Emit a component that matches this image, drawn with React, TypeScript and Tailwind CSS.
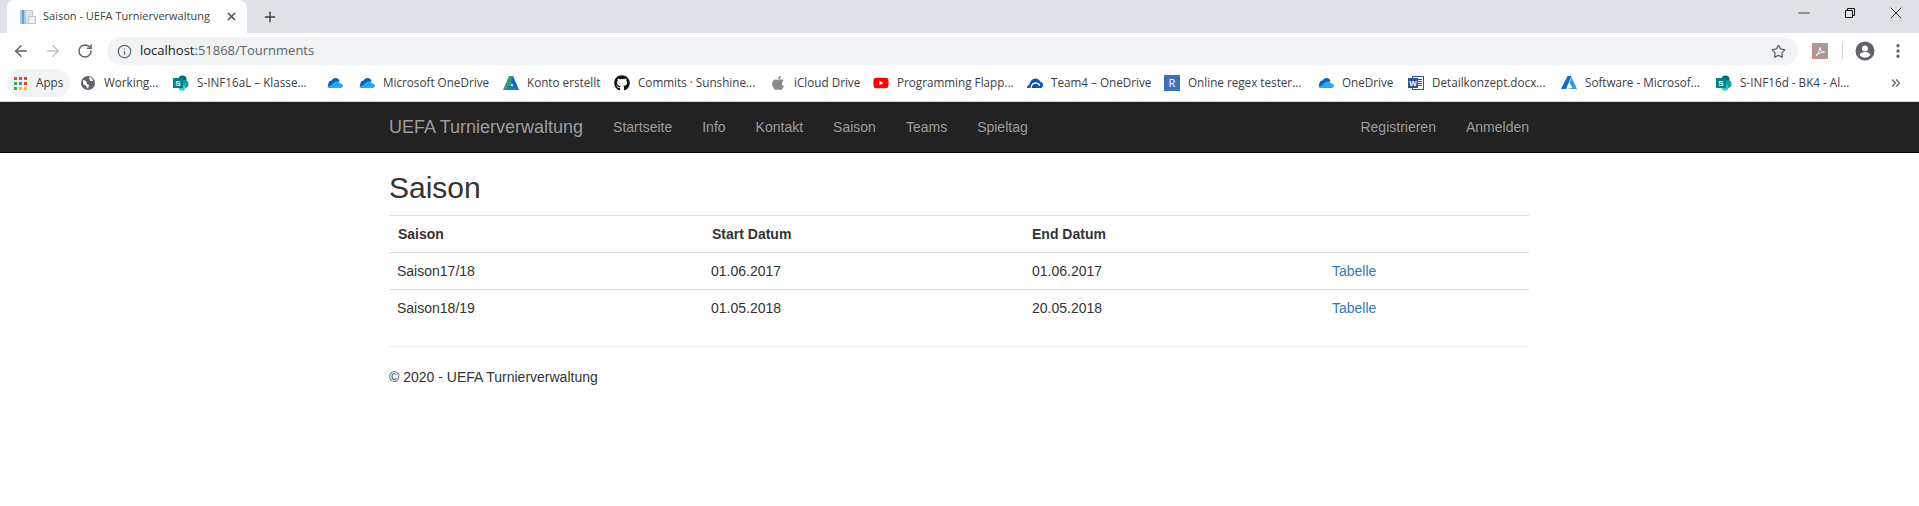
import { FaGithub, FaApple, FaYoutube } from "react-icons/fa";
import { ArrowLeft, ArrowRight, RotateCw, Info, Star, Plus, X, Minus, EllipsisVertical, ChevronsRight } from "lucide-react";

const SharePoint = () => (
  <svg width="16" height="16" viewBox="0 0 16 16">
    <circle cx="9.500" cy="4.500" r="4" fill="#036c70" />
    <circle cx="11.500" cy="9" r="4" fill="#1a9ba1" />
    <circle cx="9" cy="12.500" r="3.300" fill="#37c6d0" />
    <rect x="0" y="3" width="10" height="10" fill="#038387" />
    <text x="5" y="11" fontSize="8" fontWeight="700" fill="#fff" textAnchor="middle" fontFamily="Liberation Sans, sans-serif">S</text>
  </svg>
);

const Cloud = () => (
  <svg width="16" height="16" viewBox="0 0 16 16">
    <path d="M1.500 8.500C1.500 6.500 3 5.500 4.500 5.500 5.500 3.800 7 3 8.500 3c2 0 3.500 1.300 4 3L7 11 1.500 12C.5 11 1 9.500 1.500 8.500z" fill="#0364b8" />
    <path d="M6 8.500c.8-1.500 2.500-2.500 4-2.300 1.300.1 2.300.9 2.700 2 1.700 0 3.300 1 3.300 2.300 0 1.300-1 2.500-2.500 2.500H3c-1.500 0-2.500-.6-3-1.500 1 .3 3.500-.5 6-3z" fill="#28a8ea" />
  </svg>
);

// older OneDrive for Business cloud, solid blue with a white arc
const BusinessCloud = () => (
  <svg width="16" height="16" viewBox="0 0 16 16">
    <path d="M0 13c0-2 1-3.300 2.500-3.600C3 6.500 5.500 3.500 8.500 3.500c2.300 0 4 1.400 4.700 3.300 1.700.3 2.800 1.300 2.800 3.200 0 1.800-1 3-2.500 3z" fill="#0b4fb0" />
    <path d="M4 13c.3-3 2.500-5 5-5 2 0 3.300 1.200 3.800 3" fill="none" stroke="#fff" strokeWidth="1.300" />
  </svg>
);

const bookmarks: { label?: string; icon: React.ReactNode; width: string }[] = [
  { label: "Working...", width: "w-[93px]", icon: (
    <svg width="16" height="16" viewBox="0 0 16 16"><circle cx="8" cy="8" r="7" fill="#5f6368" /><path d="M3 5l3 1 1 3 2 1-1 4-2-3-3-2zM9 2l3 1 1 3-3 0z" fill="#fff" /></svg>
  ) },
  { label: "S-INF16aL – Klasse...", width: "w-[154px]", icon: <SharePoint /> },
  { width: "w-[32px]", icon: <Cloud /> },
  { label: "Microsoft OneDrive", width: "w-[144px]", icon: <Cloud /> },
  { label: "Konto erstellt", width: "w-[111px]", icon: (
    <svg width="16" height="16" viewBox="0 0 16 16"><path d="M6 1h4l1 3-5 11H0z" fill="#2f9e6e" /><path d="M10 1l6 14h-4L8 6z" fill="#0f6cb5" /><path d="M5 11h6l1 4H3z" fill="#1f7f9e" /></svg>
  ) },
  { label: "Commits · Sunshine...", width: "w-[156px]", icon: <FaGithub size={16} color="#111" /> },
  { label: "iCloud Drive", width: "w-[103px]", icon: <FaApple size={16} color="#8a8a8a" /> },
  { label: "Programming Flapp...", width: "w-[154px]", icon: <FaYoutube size={16} color="#f00" /> },
  { label: "Team4 – OneDrive", width: "w-[137px]", icon: <BusinessCloud /> },
  { label: "Online regex tester...", width: "w-[154px]", icon: (
    <span className="flex h-4 w-4 items-center justify-center bg-[#3f72b5] text-[11px] text-white">R</span>
  ) },
  { label: "OneDrive", width: "w-[90px]", icon: <Cloud /> },
  { label: "Detailkonzept.docx...", width: "w-[153px]", icon: (
    <svg width="16" height="16" viewBox="0 0 16 16">
      <rect x="4.500" y="1.500" width="11" height="13" fill="#fff" stroke="#2b579a" />
      <path d="M10 4.500h4M10 6.500h4M10 8.500h4M10 10.500h4" stroke="#2b579a" />
      <rect x="0" y="3" width="10" height="10" fill="#2b579a" />
      <text x="5" y="11" fontSize="8" fontWeight="700" fill="#fff" textAnchor="middle" fontFamily="Liberation Sans, sans-serif">W</text>
    </svg>
  ) },
  { label: "Software - Microsof...", width: "w-[155px]", icon: (
    <svg width="16" height="16" viewBox="0 0 16 16"><path d="M6.500 1h4L5 14H0z" fill="#0a6fc9" /><path d="M10.500 2L16 14H5l6.500-1-3-5z" fill="#2f9be8" /></svg>
  ) },
  { label: "S-INF16d - BK4 - Al...", width: "w-[150px]", icon: <SharePoint /> },
];

const navLinks = ["Startseite", "Info", "Kontakt", "Saison", "Teams", "Spieltag"];

const rows = [
  { name: "Saison17/18", start: "01.06.2017", end: "01.06.2017" },
  { name: "Saison18/19", start: "01.05.2018", end: "20.05.2018" },
];

const AppsIcon = () => {
  const colors = ["#ea4335", "#ea4335", "#ea4335", "#34a853", "#4285f4", "#ea4335", "#34a853", "#fbbc05", "#fbbc05"];
  return (
    <span className="grid grid-cols-3 gap-[2px]">
      {colors.map((c, i) => (
        <span key={i} className="h-[3px] w-[3px]" style={{ backgroundColor: c }} />
      ))}
    </span>
  );
};

export default function App() {
  return (
    <div className="h-[506px] overflow-hidden bg-white font-['Liberation_Sans',sans-serif] text-[14px] text-[#333]">
      {/* tab strip */}
      <div className="flex h-[33px] bg-[#dee1e6]">
        <div className="ml-[7px] flex h-[33px] w-[240px] items-center rounded-t-lg bg-white pl-[13px] pr-[9px] font-['Open_Sans',sans-serif] text-[11px] text-[#3c4043]">
          <svg width="16" height="16" viewBox="0 0 16 16" className="mr-[7px] shrink-0">
            <rect x="0" y="1" width="6" height="14" fill="#a9cdea" />
            <rect x="2" y="1" width="2" height="14" fill="#5ea3d8" />
            <rect x="5.500" y="1.500" width="7" height="13" fill="#e3e6ea" stroke="#c3c7cc" />
            <rect x="8.500" y="7.500" width="7" height="7" fill="#eef0f2" stroke="#c3c7cc" />
          </svg>
          <span className="flex-1 truncate">Saison - UEFA Turnierverwaltung</span>
          <X size={13} strokeWidth={2.400} className="text-[#3c4043]" />
        </div>
        <div className="ml-[15px] flex h-[33px] items-center">
          <Plus size={16} strokeWidth={2.200} className="text-[#3c4043]" />
        </div>
        <div className="ml-auto flex">
          <div className="flex w-[46px] items-center justify-center pb-[7px]"><Minus size={18} strokeWidth={1} className="text-[#111]" /></div>
          <div className="flex w-[46px] items-center justify-center pb-[7px]">
            <svg width="10" height="10" viewBox="0 0 10 10" fill="none" stroke="#111"><path d="M.5 2.500h7v7h-7zM2.500 2.500v-2h7v7h-2" /></svg>
          </div>
          <div className="flex w-[46px] items-center justify-center pb-[7px]"><X size={20} strokeWidth={1} className="text-[#111]" /></div>
        </div>
      </div>

      {/* address bar */}
      <div className="flex h-[36px] items-center bg-white">
        <ArrowLeft size={18} strokeWidth={2} className="ml-[12px] text-[#5f6368]" />
        <ArrowRight size={18} strokeWidth={2} className="ml-[14px] text-[#bdc1c6]" />
        <RotateCw size={16} strokeWidth={2.200} className="ml-[15px] text-[#5f6368]" />
        <div className="ml-[14px] flex h-[28px] w-[1691px] items-center rounded-full bg-[#f1f3f4] pl-[10px] pr-[12px] font-['Open_Sans',sans-serif] text-[13px]">
          <Info size={15} strokeWidth={2} className="text-[#5f6368]" />
          <span className="ml-[8px] text-[#202124]">localhost</span>
          <span className="text-[#5f6368]">:51868/Tournments</span>
          <Star size={15} strokeWidth={2} className="ml-auto text-[#5f6368]" />
        </div>
        <svg width="16" height="16" viewBox="0 0 16 16" className="ml-[14px]">
          <rect x="0.500" y="0.500" width="15" height="15" fill="#a89a98" stroke="#d98a80" />
          <path d="M4 12.500c2-1 3.500-4 4-8 .3 3 2 4.500 4.500 4.500-3 0-6 1-8.500 3.500z" fill="none" stroke="#fff" strokeWidth="1" />
        </svg>
        <span className="ml-[14px] h-4 w-px bg-[#d0d3d7]" />
        <svg width="20" height="20" viewBox="0 0 20 20" className="ml-[12px]">
          <circle cx="10" cy="10" r="9.500" fill="#5f6368" />
          <circle cx="10" cy="7.500" r="3" fill="#fff" />
          <path d="M4.500 14c1-2.300 3.200-3 5.500-3s4.500.7 5.500 3a7 7 0 0 1-11 0z" fill="#fff" />
        </svg>
        <EllipsisVertical size={18} strokeWidth={2.400} className="ml-[14px] text-[#5f6368]" />
      </div>

      {/* bookmarks */}
      <div className="flex h-[33px] items-center border-b border-[#d0d2d5] bg-white pb-[4px] font-['Open_Sans',sans-serif] text-[11.700px] text-[#3c4043]">
        <div className="ml-[7px] flex h-[28px] w-[63px] items-center gap-[9px] rounded-full bg-[#f1f3f4] pl-[7px]">
          <AppsIcon />
          <span>Apps</span>
        </div>
        <div className="ml-[10px] flex">
          {bookmarks.map((b, i) => (
            <div key={i} className={`flex shrink-0 items-center gap-2 ${b.width}`}>
              <span className="flex h-4 w-4 shrink-0 items-center justify-center">{b.icon}</span>
              {b.label && <span className="whitespace-nowrap">{b.label}</span>}
            </div>
          ))}
        </div>
        <ChevronsRight size={14} strokeWidth={2.400} className="ml-[23px] text-[#5f6368]" />
      </div>

      {/* navbar */}
      <nav className="h-[51px] border-b border-[#080808] bg-[#222]">
        <div className="ml-[389px] flex h-[50px] w-[1140px] items-center text-[#9d9d9d]">
          <span className="mr-[30px] text-[18px]">UEFA Turnierverwaltung</span>
          <ul className="flex gap-[30px]">
            {navLinks.map((l) => (
              <li key={l}>{l}</li>
            ))}
          </ul>
          <ul className="ml-auto flex gap-[30px]">
            <li>Registrieren</li>
            <li>Anmelden</li>
          </ul>
        </div>
      </nav>

      {/* content */}
      <main className="ml-[389px] w-[1140px]">
        <h2 className="mt-[18px] mb-[11px] text-[30px] leading-[33px] text-[#333]">Saison</h2>
        <table className="w-full table-fixed border-collapse">
          <thead>
            <tr className="border-y border-[#ddd]">
              <th className="w-[314px] py-2 pl-[9px] pr-2 text-left leading-[20px]">Saison</th>
              <th className="w-[321px] py-2 pl-[9px] pr-2 text-left leading-[20px]">Start Datum</th>
              <th className="w-[300px] py-2 pl-2 pr-2 text-left leading-[20px]">End Datum</th>
              <th className="px-2 py-2" />
            </tr>
          </thead>
          <tbody>
            {rows.map((r, i) => (
              <tr key={r.name} className={i === 0 ? "border-b border-[#ddd]" : ""}>
                <td className="px-2 py-2 leading-[20px]">{r.name}</td>
                <td className="px-2 py-2 leading-[20px]">{r.start}</td>
                <td className="px-2 py-2 leading-[20px]">{r.end}</td>
                <td className="px-2 py-2 leading-[20px]">
                  <a className="text-[#337ab7]">Tabelle</a>
                </td>
              </tr>
            ))}
          </tbody>
        </table>
        <hr className="mt-[20px] mb-[20px] border-t border-[#eee]" />
        <footer>
          <p className="leading-[20px]">© 2020 - UEFA Turnierverwaltung</p>
        </footer>
      </main>
    </div>
  );
}
